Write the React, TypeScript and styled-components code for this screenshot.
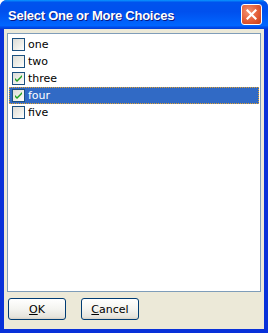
import React, { useState } from 'react'
import styled, { createGlobalStyle } from 'styled-components'

const GlobalStyle = createGlobalStyle`
  html, body {
    margin: 0;
    padding: 0;
    background: #ffffff;
  }
`

const Window = styled.div`
  width: 268px;
  height: 333px;
  box-sizing: border-box;
  display: flex;
  flex-direction: column;
  background: #0831d9;
  border-radius: 7px 7px 0 0;
  overflow: hidden;
  font-family: Tahoma, 'DejaVu Sans', sans-serif;
`

const TitleBar = styled.div`
  height: 29px;
  flex: none;
  display: flex;
  align-items: center;
  justify-content: space-between;
  padding: 0 6px 0 8px;
  background: linear-gradient(
    to bottom,
    #0997ff 0%,
    #0053ee 8%,
    #0050ee 40%,
    #0066ff 88%,
    #0050ee 93%,
    #003dd7 100%
  );
`

const Title = styled.span`
  color: #ffffff;
  font-family: 'Liberation Sans', Arial, sans-serif;
  font-weight: bold;
  font-size: 13px;
  letter-spacing: -0.25px;
  text-shadow: 1px 1px 0 #0a1883;
  margin-top: 1px;
`

const CloseButton = styled.div`
  width: 21px;
  height: 21px;
  box-sizing: border-box;
  border: 1px solid #ffffff;
  border-radius: 3px;
  background: radial-gradient(circle at 35% 35%, #f49373 0%, #e35c36 55%, #c63b16 100%);
  display: flex;
  align-items: center;
  justify-content: center;
`

const Client = styled.div`
  flex: 1;
  margin: 0 4px 4px 4px;
  background: #ece9d8;
  display: flex;
  flex-direction: column;
  padding: 4px 3px 9px 3px;
  gap: 6px;
`

const ListBox = styled.div`
  flex: 1;
  background: #ffffff;
  border: 1px solid #7f9db9;
  padding: 2px 1px;
  display: flex;
  flex-direction: column;
`

const Row = styled.div<{ $selected?: boolean }>`
  height: 17px;
  box-sizing: border-box;
  display: flex;
  align-items: center;
  gap: 3px;
  padding-left: 2px;
  font-size: 11px;
  color: ${(p) => (p.$selected ? '#ffffff' : '#000000')};
  background: ${(p) => (p.$selected ? '#316ac5' : 'transparent')};
  border: 1px ${(p) => (p.$selected ? 'dotted #e0a030' : 'solid transparent')};
`

const Box = styled.span`
  width: 13px;
  height: 13px;
  box-sizing: border-box;
  border: 1px solid #1c5180;
  background: linear-gradient(135deg, #dcdcd7 0%, #f0f0ea 60%, #ffffff 100%);
  display: flex;
  align-items: center;
  justify-content: center;
  flex: none;
`

const ButtonRow = styled.div`
  display: flex;
  gap: 15px;
  padding-left: 1px;
`

const Button = styled.button`
  width: 58px;
  height: 22px;
  box-sizing: border-box;
  border: 1px solid #003c74;
  border-radius: 3px;
  background: linear-gradient(to bottom, #ffffff 0%, #f4f4f0 50%, #e6e4dc 90%, #d6d0c5 100%);
  font-family: Tahoma, 'DejaVu Sans', sans-serif;
  font-size: 11px;
  color: #000000;
  padding: 0;
  u {
    text-decoration: underline;
  }
`

const Check = () => (
  <svg width="9" height="9" viewBox="0 0 9 9">
    <path d="M1 4 L3 6 L8 1 L8 3 L3 8 L1 6 Z" fill="#21a121" />
  </svg>
)

const items = ['one', 'two', 'three', 'four', 'five']

export default function App() {
  const [checked] = useState<Record<string, boolean>>({ three: true, four: true })
  const selected = 'four'

  return (
    <>
      <GlobalStyle />
      <Window>
        <TitleBar>
          <Title>Select One or More Choices</Title>
          <CloseButton>
            <svg width="11" height="11" viewBox="0 0 11 11">
              <path d="M1.5 1.5 L9.5 9.5 M9.5 1.5 L1.5 9.5" stroke="#ffffff" strokeWidth="2.2" strokeLinecap="square" />
            </svg>
          </CloseButton>
        </TitleBar>
        <Client>
          <ListBox>
            {items.map((it) => (
              <Row key={it} $selected={it === selected}>
                <Box>{checked[it] && <Check />}</Box>
                <span>{it}</span>
              </Row>
            ))}
          </ListBox>
          <ButtonRow>
            <Button>
              <u>O</u>K
            </Button>
            <Button>
              <u>C</u>ancel
            </Button>
          </ButtonRow>
        </Client>
      </Window>
    </>
  )
}
